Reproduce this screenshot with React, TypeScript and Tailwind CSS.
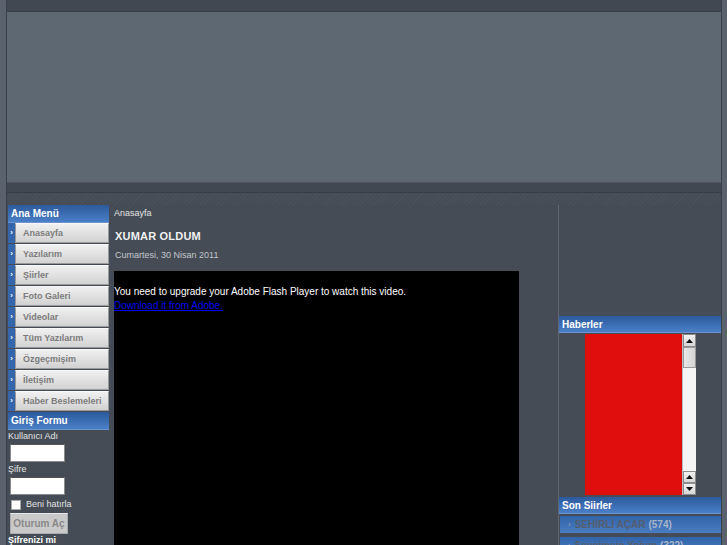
import React from 'react';

const MENU = ['Anasayfa', 'Yazılarım', 'Şiirler', 'Foto Galeri', 'Videolar', 'Tüm Yazılarım', 'Özgeçmişim', 'İletişim', 'Haber Beslemeleri'];

function Tri({ down }: { down?: boolean }) {
  return (
    <svg width="7" height="4" viewBox="0 0 7 4" className="block">
      {down ? <polygon points="0,0 7,0 3.5,4" fill="#111" /> : <polygon points="0,4 7,4 3.5,0" fill="#111" />}
    </svg>
  );
}

function ScrollBtn({ down, h }: { down?: boolean; h: string }) {
  return (
    <div className={`${h} bg-gradient-to-b from-[#f2f2f2] to-[#d6d6d6] border border-[#8c8c8c] flex items-center justify-center`}>
      <Tri down={down} />
    </div>
  );
}

function BlueHeader({ title, h = 'h-[17px]' }: { title: string; h?: string }) {
  return (
    <div className={`${h} shrink-0 bg-gradient-to-b from-[#2c5a9c] to-[#4a7fc7] border-b border-[#6b94cf] flex items-center pl-[3px] text-[10px] font-bold text-white`}>
      {title}
    </div>
  );
}

export default function App() {
  return (
    <div className="w-[727px] h-[545px] overflow-hidden flex bg-[#58606b] font-['Liberation_Sans',Arial,sans-serif]">
      {/* left edge */}
      <div className="w-[7px] shrink-0 bg-[#5a626d] border-r border-[#3a4049]" />

      <div className="w-[714px] shrink-0 flex flex-col">
        {/* top bar + banner */}
        <div className="h-[12px] bg-[#414852] border-b border-[#373d45] shrink-0" />
        <div className="h-[170px] bg-[#5e6873] shrink-0" />
        <div className="h-[11px] bg-[#414852] border-t border-[#4d5560] border-b border-b-[#363c44] shrink-0" />
        <div className="h-[12px] shrink-0 bg-[repeating-linear-gradient(135deg,#4a515b_0_1px,#454c56_1px_3px)]" />

        {/* columns */}
        <div className="flex flex-1 bg-[#454c56] min-h-0">
          {/* left column */}
          <div className="w-[103px] shrink-0 px-[1px] flex flex-col">
            <BlueHeader title="Ana Menü" h="h-[18px]" />
            <div className="flex flex-col">
              {MENU.map((m) => (
                <div key={m} className="h-[20px] mb-[1px] flex">
                  <div className="w-[7px] bg-[#3566ab] flex items-center justify-center text-white text-[8px] font-bold leading-none">›</div>
                  <div className="flex-1 bg-gradient-to-b from-[#f0f0f0] to-[#d2d2d2] border border-[#9a9a9a] border-t-[#f8f8f8] flex items-center pl-[7px] pt-[1px] text-[9px] font-bold text-[#7c7c7c]">
                    {m}
                  </div>
                </div>
              ))}
            </div>
            <BlueHeader title="Giriş Formu" h="h-[18px]" />
            <div className="flex flex-col text-[9px] text-[#e4e4e4]">
              <div className="mt-[1px] leading-[11px]">Kullanıcı Adı</div>
              <input className="ml-[2px] mt-[2px] w-[55px] h-[18px] bg-white border border-[#8a8a8a] border-t-[#555]" />
              <div className="mt-[2px] leading-[11px]">Şifre</div>
              <input type="password" className="ml-[2px] mt-[2px] w-[55px] h-[18px] bg-white border border-[#8a8a8a] border-t-[#555]" />
              <div className="mt-[4px] flex items-center h-[11px]">
                <div className="ml-[3px] w-[10px] h-[10px] bg-white border border-[#aaa]" />
                <span className="ml-[5px]">Beni hatırla</span>
              </div>
              <div className="mt-[3px] ml-[2px] w-[58px] h-[21px] bg-[#c9c9c9] border border-[#aaa] border-t-[#e8e8e8] flex items-center justify-center text-[10px] font-bold text-[#8a8a8a]">
                Oturum Aç
              </div>
              <div className="mt-[1px] font-bold text-white leading-[11px]">Şifrenizi mi<br />Unuttunuz?</div>
            </div>
          </div>

          {/* center column */}
          <div className="w-[448px] shrink-0 pl-[4px] flex flex-col">
            <div className="mt-[3px] text-[9px] leading-[11px] text-[#e2e2e2]">Anasayfa</div>
            <div className="mt-[10px] ml-[1px] text-[11px] leading-[14px] font-bold text-[#f2f2f2] tracking-[0.2px]">XUMAR OLDUM</div>
            <div className="mt-[7px] ml-[1px] text-[9px] leading-[11px] text-[#c2c6cc]">Cumartesi, 30 Nisan 2011</div>
            <div className="mt-[10px] w-[405px] flex-1 bg-black pt-[14px] text-[10px] leading-[14px]">
              <div className="text-white">You need to upgrade your Adobe Flash Player to watch this video.</div>
              <a href="#" className="text-[#0000ee] underline">Download it from Adobe.</a>
            </div>
          </div>

          {/* divider */}
          <div className="w-[1px] shrink-0 bg-[#5e6671]" />

          {/* right column */}
          <div className="w-[162px] shrink-0 flex flex-col">
            <div className="h-[111px] shrink-0" />
            <BlueHeader title="Haberler" />
            <div className="mt-[1px] h-[161px] shrink-0 flex pl-[26px]">
              <div className="w-[97px] bg-[#e10e0e]" />
              <div className="w-[14px] flex flex-col bg-[#f5f5f5] border-l border-[#bbb]">
                <ScrollBtn h="h-[13px]" />
                <div className="h-[21px] bg-gradient-to-r from-[#e8e8e8] to-[#d4d4d4] border border-[#999]" />
                <div className="flex-1" />
                <ScrollBtn h="h-[12px]" />
                <ScrollBtn h="h-[12px]" down />
              </div>
            </div>
            <div className="mt-[2px]">
              <BlueHeader title="Son Siirler" />
            </div>
            <div className="mt-[2px] h-[17px] ml-[1px] shrink-0 bg-gradient-to-b from-[#3264aa] to-[#4a7cc2] flex items-center text-[10px] font-bold">
              <span className="ml-[8px] text-[#8796ad] text-[8px]">›</span>
              <span className="ml-[4px] text-[#555e6c]">SEHİRLİ AÇAR</span>
              <span className="ml-[3px] text-[#a9b5c8]">(574)</span>
            </div>
            <div className="mt-[4px] h-[17px] ml-[1px] shrink-0 bg-gradient-to-b from-[#3264aa] to-[#4a7cc2] flex items-center text-[10px] font-bold">
              <span className="ml-[8px] text-[#8796ad] text-[8px]">›</span>
              <span className="ml-[4px] text-[#555e6c]">Sevgimsin Yolum</span>
              <span className="ml-[3px] text-[#a9b5c8]">(322)</span>
            </div>
          </div>
        </div>
      </div>

      {/* right edge */}
      <div className="w-[6px] shrink-0 bg-[#5a626d] border-l border-[#3a4049]" />
    </div>
  );
}
